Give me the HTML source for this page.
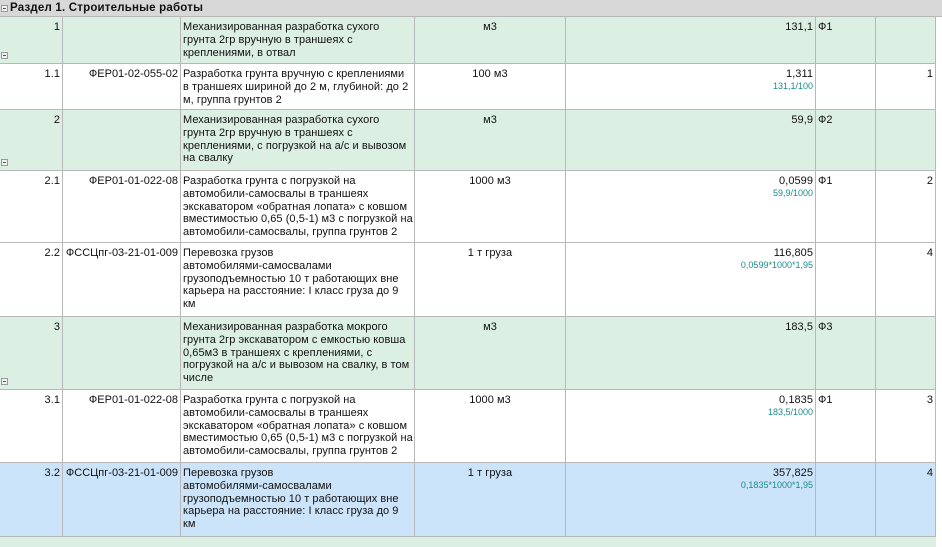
<!DOCTYPE html>
<html><head><meta charset="utf-8"><style>
*{margin:0;padding:0;box-sizing:border-box}
body{width:942px;height:541px;overflow:hidden;background:#fff;font-family:"Liberation Sans","DejaVu Sans",sans-serif;font-size:11px;letter-spacing:0.05px;color:#111;position:relative}
.hdr{position:absolute;left:0;top:0;width:942px;height:17px;background:#d8d8d8;border-bottom:1px solid #b8b8b8;font-weight:bold;font-size:11.5px;line-height:16px;padding-left:10px;letter-spacing:0.2px}
.row{position:absolute;left:0;width:936px;border-bottom:1px solid #b8b8b8}
.g{background:#dcefe3}.w{background:#fff}.b{background:#cce4fa}
.c{position:absolute;top:0;bottom:0;border-right:1px solid #b8b8b8;padding:4px 2px 0 2px;line-height:12.8px;white-space:nowrap;overflow:hidden}
.c1{left:0;width:63px;text-align:right}
.c2{left:63px;width:118px;text-align:right;letter-spacing:0}
.c3{left:181px;width:234px}
.c4{left:415px;width:151px;text-align:center}
.c5{left:566px;width:250px;text-align:right}
.c6{left:816px;width:60px}
.c7{left:876px;width:60px;text-align:right}
.f{color:#1c8a8a;font-size:9px;line-height:11px;display:block;letter-spacing:0}
.m{position:absolute;left:1px;width:7px;height:7px;border:1px solid #999;background:#f4f4f4}
.m:after{content:"";position:absolute;left:1px;top:2px;width:3px;height:1px;background:#555}
</style></head><body>
<div class="hdr"><span class="m" style="top:5px;left:1px"></span>Раздел 1. Строительные работы</div>

<div class="row g" style="top:17px;height:47px"><div class="c c1">1</div><div class="c c2"></div><div class="c c3">Механизированная разработка сухого<br>грунта 2гр вручную в траншеях с<br>креплениями, в отвал</div><div class="c c4">м3</div><div class="c c5">131,1</div><div class="c c6">Ф1</div><div class="c c7"></div><span class="m" style="top:35px"></span></div>

<div class="row w" style="top:64px;height:46px"><div class="c c1">1.1</div><div class="c c2">ФЕР01-02-055-02</div><div class="c c3">Разработка грунта вручную с креплениями<br>в траншеях шириной до 2 м, глубиной: до 2<br>м, группа грунтов 2</div><div class="c c4">100 м3</div><div class="c c5">1,311<span class="f">131,1/100</span></div><div class="c c6"></div><div class="c c7">1</div></div>

<div class="row g" style="top:110px;height:61px"><div class="c c1">2</div><div class="c c2"></div><div class="c c3">Механизированная разработка сухого<br>грунта 2гр вручную в траншеях с<br>креплениями, с погрузкой на а/с и вывозом<br>на свалку</div><div class="c c4">м3</div><div class="c c5">59,9</div><div class="c c6">Ф2</div><div class="c c7"></div><span class="m" style="top:49px"></span></div>

<div class="row w" style="top:171px;height:72px"><div class="c c1">2.1</div><div class="c c2">ФЕР01-01-022-08</div><div class="c c3">Разработка грунта с погрузкой на<br>автомобили-самосвалы в траншеях<br>экскаватором «обратная лопата» с ковшом<br>вместимостью 0,65 (0,5-1) м3 с погрузкой на<br>автомобили-самосвалы, группа грунтов 2</div><div class="c c4">1000 м3</div><div class="c c5">0,0599<span class="f">59,9/1000</span></div><div class="c c6">Ф1</div><div class="c c7">2</div></div>

<div class="row w" style="top:243px;height:74px"><div class="c c1">2.2</div><div class="c c2">ФССЦпг-03-21-01-009</div><div class="c c3">Перевозка грузов<br>автомобилями-самосвалами<br>грузоподъемностью 10 т работающих вне<br>карьера на расстояние: I класс груза до 9<br>км</div><div class="c c4">1 т груза</div><div class="c c5">116,805<span class="f">0,0599*1000*1,95</span></div><div class="c c6"></div><div class="c c7">4</div></div>

<div class="row g" style="top:317px;height:73px"><div class="c c1">3</div><div class="c c2"></div><div class="c c3">Механизированная разработка мокрого<br>грунта 2гр экскаватором с емкостью ковша<br>0,65м3 в траншеях с креплениями, с<br>погрузкой на а/с и вывозом на свалку, в том<br>числе</div><div class="c c4">м3</div><div class="c c5">183,5</div><div class="c c6">Ф3</div><div class="c c7"></div><span class="m" style="top:61px"></span></div>

<div class="row w" style="top:390px;height:73px"><div class="c c1">3.1</div><div class="c c2">ФЕР01-01-022-08</div><div class="c c3">Разработка грунта с погрузкой на<br>автомобили-самосвалы в траншеях<br>экскаватором «обратная лопата» с ковшом<br>вместимостью 0,65 (0,5-1) м3 с погрузкой на<br>автомобили-самосвалы, группа грунтов 2</div><div class="c c4">1000 м3</div><div class="c c5">0,1835<span class="f">183,5/1000</span></div><div class="c c6">Ф1</div><div class="c c7">3</div></div>

<div class="row b" style="top:463px;height:74px"><div class="c c1">3.2</div><div class="c c2">ФССЦпг-03-21-01-009</div><div class="c c3">Перевозка грузов<br>автомобилями-самосвалами<br>грузоподъемностью 10 т работающих вне<br>карьера на расстояние: I класс груза до 9<br>км</div><div class="c c4">1 т груза</div><div class="c c5">357,825<span class="f">0,1835*1000*1,95</span></div><div class="c c6"></div><div class="c c7">4</div></div>

<div class="row g" style="top:537px;height:10px;border:none"></div>
</body></html>
